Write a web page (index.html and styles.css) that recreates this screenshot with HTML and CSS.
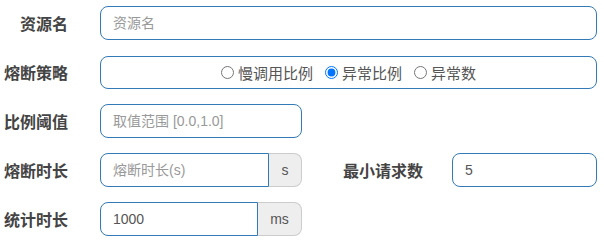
FILE: index.html
```html
<!DOCTYPE html>
<html lang="zh-CN">
<head>
  <meta charset="UTF-8" />
  <meta name="viewport" content="width=device-width, initial-scale=1.0" />
  <title>熔断规则</title>
  <link rel="stylesheet" href="styles.css">
</head>
<body>
  <form class="rule-form">
    <div class="row">
      <label class="label" for="resource">资源名</label>
      <input class="input wide" type="text" id="resource" placeholder="资源名">
    </div>

    <div class="row">
      <label class="label">熔断策略</label>
      <div class="input wide radio-box">
        <label class="radio"><input type="radio" name="grade" value="0"> 慢调用比例</label>
        <label class="radio"><input type="radio" name="grade" value="1" checked> 异常比例</label>
        <label class="radio"><input type="radio" name="grade" value="2"> 异常数</label>
      </div>
    </div>

    <div class="row">
      <label class="label" for="ratio">比例阈值</label>
      <input class="input short" type="text" id="ratio" placeholder="取值范围 [0.0,1.0]">
    </div>

    <div class="row">
      <label class="label" for="timeWindow">熔断时长</label>
      <div class="input-group">
        <input class="input" type="text" id="timeWindow" placeholder="熔断时长(s)">
        <span class="addon">s</span>
      </div>
      <label class="label label-inline" for="minRequest">最小请求数</label>
      <input class="input min-req" type="text" id="minRequest" value="5">
    </div>

    <div class="row">
      <label class="label" for="statInterval">统计时长</label>
      <div class="input-group">
        <input class="input" type="text" id="statInterval" value="1000">
        <span class="addon addon-ms">ms</span>
      </div>
    </div>
  </form>
</body>
</html>
```

FILE: styles.css
```css
body { margin: 0; background: #fff; font-family: "Liberation Sans", "Noto Sans CJK SC", sans-serif; font-size: 14px; color: #555; }
.rule-form { padding-top: 6px; display: flex; flex-direction: column; gap: 15px; }
.row { display: flex; align-items: center; height: 34px; }
.label { width: 68px; flex: none; text-align: right; font-size: 16px; font-weight: bold; color: #444; margin-right: 32px; }
.label-inline { width: auto; margin-left: 41px; margin-right: 29px; }
.input { box-sizing: border-box; height: 34px; padding: 6px 12px; border: 1px solid #337ab7; border-radius: 8px; font-family: inherit; font-size: 14px; color: #555; background: #fff; outline: none; }
.input::placeholder { color: #999; }
.wide { width: 497px; }
.short { width: 202px; }
.min-req { width: 145px; }
.radio-box { display: flex; justify-content: center; align-items: center; gap: 12px; padding: 0 12px; height: 33px; }
.radio { display: flex; align-items: center; gap: 4px; color: #555; font-size: 15px; }
.radio input { margin: 0; width: 13px; height: 13px; }
.input-group { display: flex; width: 202px; height: 34px; }
.input-group .input { flex: 1; min-width: 0; border-radius: 8px 0 0 8px; }
.addon { box-sizing: border-box; width: 33px; display: flex; align-items: center; justify-content: center; background: #eee; border: 1px solid #ccc; border-left: 0; border-radius: 0 8px 8px 0; color: #555; }
.addon-ms { width: 44px; }
```
